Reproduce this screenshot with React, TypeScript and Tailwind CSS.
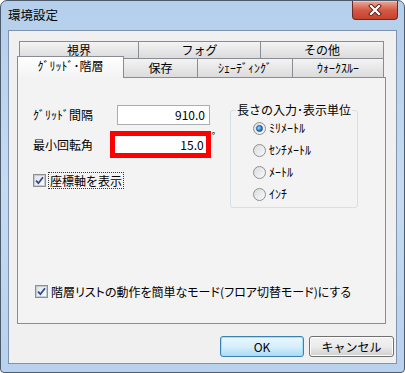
import React from "react";

const FONT = { fontFamily: '"Noto Sans CJK JP", "Noto Sans", sans-serif' };

function CheckBox() {
  return (
    <span className="flex h-[13px] w-[13px] shrink-0 items-center justify-center border border-[#8e8f8f] bg-white">
      <span className="flex h-[11px] w-[11px] items-center justify-center border border-[#c6cbd1] bg-gradient-to-br from-[#dfe3e8] to-[#fbfbfb]">
        <svg viewBox="0 0 9 9" className="h-[9px] w-[9px]">
          <path d="M1 4.6 L3.4 7.2 L8 1.2" fill="none" stroke="#2d4b8e" strokeWidth="1.8" />
        </svg>
      </span>
    </span>
  );
}

function Radio({ on }: { on?: boolean }) {
  return (
    <span className="flex h-[13px] w-[13px] shrink-0 items-center justify-center rounded-full border border-[#8e8f8f] bg-gradient-to-br from-[#d8dbe0] to-[#fafafa]">
      {on && (
        <span className="h-[7px] w-[7px] rounded-full border border-[#1b4f89] bg-[radial-gradient(circle_at_35%_35%,#9fdcff,#2a7bd0_60%,#174d8f)]" />
      )}
    </span>
  );
}

function Tab({ label, w, h = "h-[19px]" }: { label: string; w: string; h?: string }) {
  return (
    <div
      className={`${w} ${h} -ml-px flex items-center justify-center border border-b-0 border-[#898c95] bg-gradient-to-b from-[#f3f3f3] to-[#dcdcdc] text-[12px] leading-none text-black first:ml-0`}
    >
      {label}
    </div>
  );
}

export default function App() {
  return (
    <div className="h-[373px] w-[405px] bg-white" style={FONT}>
      <div className="flex h-full w-full flex-col rounded-t-[7px] rounded-b-[4px] border border-[#4d5b6c] bg-gradient-to-b from-[#b4cfec] via-[#c4dbf2] to-[#b8d2ee]">
        {/* title bar */}
        <div className="flex h-[29px] shrink-0 items-start justify-between">
          <span className="mt-[5px] pl-[7px] text-[12.5px] leading-[18px] text-black">環境設定</span>
          <div className="mr-[6px] flex h-[19px] w-[46px] items-center justify-center rounded-b-[4px] border border-t-0 border-[#6e2a22] bg-gradient-to-b from-[#e9a99b] via-[#d35a45] to-[#c7412a] shadow-[inset_0_1px_0_#f2c6bb]">
            <svg viewBox="0 0 14 12" className="h-[12px] w-[14px]">
              <path d="M3 2 L11 10 M11 2 L3 10" stroke="#5a2018" strokeWidth="4" strokeLinecap="square" />
              <path d="M3 2 L11 10 M11 2 L3 10" stroke="#ffffff" strokeWidth="2.2" strokeLinecap="square" />
            </svg>
          </div>
        </div>

        {/* client area */}
        <div className="mx-[7px] mb-[8px] flex flex-1 flex-col border border-[#7f93af] bg-[#f0f0f0] pl-[8px] pt-[10px]">
          {/* tabs */}
          <div className="w-[369px]">
            <div className="ml-[2px] flex">
              <Tab label="視界" w="w-[120px]" h="h-[17px]" />
              <Tab label="フォグ" w="w-[123px]" h="h-[17px]" />
              <Tab label="その他" w="w-[124px]" h="h-[17px]" />
            </div>
            <div className="flex h-[19px] items-start">
              <div className="relative z-10 -mt-[2px] flex h-[22px] w-[107px] items-start justify-center border border-b-0 border-[#898c95] bg-gradient-to-b from-white to-[#f3f3f3] pt-[3px] text-[12px] leading-none">
                ｸﾞﾘｯﾄﾞ･階層
              </div>
              <Tab label="保存" w="w-[75px]" />
              <Tab label="ｼｪｰﾃﾞｨﾝｸﾞ" w="w-[96px]" />
              <Tab label="ｳｫｰｸｽﾙｰ" w="w-[92px]" />
            </div>

            {/* panel */}
            <div className="flex h-[247px] w-[369px] flex-col border border-[#898c95] bg-[#f3f3f3] text-[12px] text-black">
              <div className="flex items-start">
                {/* left column */}
                <div className="flex w-[197px] flex-col pl-[15px] pt-[27px]">
                  <div className="flex h-[20px] items-center">
                    <span className="w-[84px]">ｸﾞﾘｯﾄﾞ間隔</span>
                    <div className="flex h-[20px] w-[93px] items-center justify-end border border-[#abadb3] bg-white pr-[4px]">
                      910.0
                    </div>
                  </div>
                  <div className="mt-[6px] flex h-[27px] items-center">
                    <span className="w-[79px]">最小回転角</span>
                    <div className="flex h-[27px] w-[102px] items-center justify-end border-[5px] border-[#ff0000] bg-white pr-[2px]">
                      15.0
                    </div>
                    <span className="mb-auto ml-[1px] text-[9px] leading-none">°</span>
                  </div>
                  <div className="mt-[14px] flex items-center gap-[2px]">
                    <CheckBox />
                    <span className="border border-dotted border-[#333] px-[1px] leading-[15px]">座標軸を表示</span>
                  </div>
                </div>

                {/* group box */}
                <div className="relative mt-[32px] ml-[15px] h-[98px] w-[128px] rounded-[3px] border border-[#d5dfe5]">
                  <span className="absolute -top-[10px] left-[5px] bg-[#f3f3f3] px-[1px] leading-[18px]">
                    長さの入力･表示単位
                  </span>
                  <div className="flex flex-col gap-[8px] pl-[22px] pt-[10px]">
                    <div className="flex h-[14px] items-center gap-[3px]">
                      <Radio on />
                      <span>ﾐﾘﾒｰﾄﾙ</span>
                    </div>
                    <div className="flex h-[14px] items-center gap-[3px]">
                      <Radio />
                      <span>ｾﾝﾁﾒｰﾄﾙ</span>
                    </div>
                    <div className="flex h-[14px] items-center gap-[3px]">
                      <Radio />
                      <span>ﾒｰﾄﾙ</span>
                    </div>
                    <div className="flex h-[14px] items-center gap-[3px]">
                      <Radio />
                      <span>ｲﾝﾁ</span>
                    </div>
                  </div>
                </div>
              </div>

              <div className="mb-[24px] mt-auto flex items-center gap-[3px] pl-[17px]">
                <CheckBox />
                <span className="leading-[15px] [font-feature-settings:'palt']">
                  階層リストの動作を簡単なモード(フロア切替モード)にする
                </span>
              </div>
            </div>
          </div>

          {/* buttons */}
          <div className="mt-[12px] flex w-[377px] justify-end gap-[5px] text-[12px]">
            <button className="flex h-[21px] w-[84px] items-center justify-center rounded-[3px] border border-[#3c7fb1] bg-gradient-to-b from-[#eaf6fd] via-[#d7effc] to-[#a9dbf6] shadow-[inset_0_0_0_1px_#9fe0fb]">
              OK
            </button>
            <button className="flex h-[21px] w-[85px] items-center justify-center rounded-[3px] border border-[#707070] bg-gradient-to-b from-[#f2f2f2] via-[#ebebeb] to-[#cfcfcf] shadow-[inset_0_0_0_1px_#fcfcfc]">
              キャンセル
            </button>
          </div>
        </div>
      </div>
    </div>
  );
}
